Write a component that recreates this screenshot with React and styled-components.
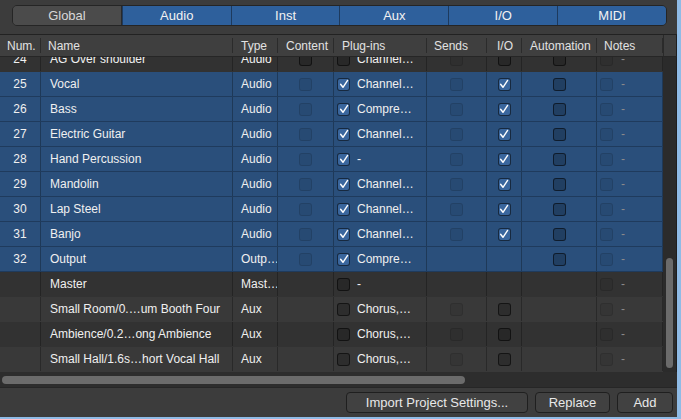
import React from 'react';
import styled, { createGlobalStyle, css } from 'styled-components';

const GlobalStyle = createGlobalStyle`
    html, body {
        margin: 0;
        padding: 0;
        background: #8fbbe6;
    }
    body {
        font-family: "Liberation Sans", Arial, sans-serif;
    }
`;

const COLS = '41px 192px 45px 56px 93px 60px 35px 75px 66px';

const Page = styled.div`
    width: 681px;
    height: 419px;
    background: #8fbbe6;
`;

const Window = styled.div`
    width: 677px;
    height: 417px;
    background: #3c3c3c;
    display: flex;
    flex-direction: column;
    overflow: hidden;
`;

const TopBar = styled.div`
    border-bottom: 1px solid #222;
    padding: 5px 10px 0 12px;
    box-sizing: border-box;
    height: 35px;
`;

const Tabs = styled.div`
    display: flex;
    height: 21px;
    border: 1px solid #252525;
    border-radius: 5px;
    overflow: hidden;
    box-sizing: border-box;
`;

const TabItem = styled.div`
    flex: 1;
    display: flex;
    align-items: center;
    justify-content: center;
    font-size: 13px;
    color: #f2f2f2;
    background: #2e609c;
    border-left: 1px solid #1d3a5e;

    &:first-child {
        border-left: none;
    }

    ${props => props.off && css`
        background: #4b4b4b;
        color: #d8d8d8;
        border-right: 1px solid #2a2a2a;
    `}
`;

const HeaderRow = styled.div`
    display: flex;
    height: 22px;
    background: #3f3f3f;
    border-bottom: 1px solid #262626;
    box-sizing: border-box;
    border-right: 1px solid #1e1e1e;
    position: relative;
    z-index: 1;
`;

const HeaderGrid = styled.div`
    display: grid;
    grid-template-columns: ${COLS};
    width: 663px;
    border-right: 1px solid #2a2a2a;
`;

const HeadCell = styled.div`
    display: flex;
    align-items: center;
    padding-left: ${props => props.pad || 8}px;
    font-size: 12px;
    color: #e2e2e2;
    position: relative;
    white-space: nowrap;

    &::after {
        content: '';
        position: absolute;
        right: 0;
        top: 3px;
        bottom: 3px;
        width: 1px;
        background: #2b2b2b;
    }
`;

const Body = styled.div`
    display: flex;
    height: 315px;
    border-right: 1px solid #1e1e1e;
    overflow: hidden;
`;

const RowList = styled.div`
    width: 663px;
    display: flex;
    flex-direction: column;
    margin-top: -10px;
`;

const Row = styled.div`
    display: grid;
    grid-template-columns: ${COLS};
    height: 25px;
    flex-shrink: 0;
    box-sizing: border-box;
    background: ${props => props.sel ? '#2a4f7b' : props.alt ? '#393939' : '#323232'};
    border-bottom: 1px solid ${props => props.sel ? '#1f3b5d' : 'transparent'};
`;

const Cell = styled.div`
    display: flex;
    align-items: center;
    justify-content: ${props => props.center ? 'center' : 'flex-start'};
    padding-left: ${props => props.pad || 0}px;
    font-size: 12px;
    color: #f0f0f0;
    white-space: nowrap;
    overflow: hidden;
    border-right: 1px solid rgba(0, 0, 0, 0.28);
    gap: ${props => props.gap || 0}px;
`;

const Dash = styled.span`
    color: #8a8a8a;
    font-size: 12px;
`;

const Box = styled.div`
    width: 13px;
    height: 13px;
    box-sizing: border-box;
    border-radius: 3px;
    flex-shrink: 0;
    display: flex;
    align-items: center;
    justify-content: center;

    ${props => props.kind === 'faint' && css`
        background: rgba(0, 0, 0, 0.06);
        border: 1px solid rgba(0, 0, 0, 0.12);
    `}
    ${props => props.kind === 'off' && css`
        background: rgba(0, 0, 0, 0.2);
        border: 1px solid rgba(0, 0, 0, 0.55);
    `}
    ${props => props.kind === 'on' && css`
        background: #3a669d;
        border: 1px solid rgba(0, 0, 0, 0.6);
    `}
`;

const VTrack = styled.div`
    width: 13px;
    background: #2b2b2b;
    display: flex;
    justify-content: center;
`;

const VThumb = styled.div`
    width: 7px;
    height: 110px;
    margin-top: 201px;
    border-radius: 4px;
    background: #6b6b6b;
`;

const HTrack = styled.div`
    height: 15px;
    background: #2d2d2d;
    border-bottom: 1px solid #262626;
    display: flex;
    align-items: center;
`;

const HThumb = styled.div`
    width: 463px;
    height: 8px;
    margin-left: 2px;
    border-radius: 4px;
    background: #6b6b6b;
`;

const Footer = styled.div`
    flex: 1;
    display: flex;
    justify-content: flex-end;
    align-items: flex-start;
    gap: 7px;
    padding: 4px 4px 0 0;
`;

const Button = styled.div`
    height: 21px;
    width: ${props => props.w}px;
    box-sizing: border-box;
    border: 1px solid #1f1f1f;
    border-radius: 4px;
    background: #414141;
    color: #e8e8e8;
    font-size: 13px;
    display: flex;
    align-items: center;
    justify-content: center;
`;

const Check = () => (
    <svg width="10" height="10" viewBox="0 0 10 10">
        <path d="M1.6 5.2 L4 8.3 L8.6 1.4" fill="none" stroke="#fff" strokeWidth="1.4" strokeLinecap="round" strokeLinejoin="round" />
    </svg>
);

const CheckBox = ({ kind }) => {
    if (!kind) return null;
    return (
        <Box kind={kind}>
            {kind === 'on' && <Check />}
        </Box>
    );
};

const tabs = ['Global', 'Audio', 'Inst', 'Aux', 'I/O', 'MIDI'];

const columns = [
    ['Num.', 7], ['Name', 7], ['Type', 8], ['Content', 8], ['Plug-ins', 8],
    ['Sends', 7], ['I/O', 10], ['Automation', 8], ['Notes', 7]
];

const selRow = (num, name, plug) => ({
    num, name, type: 'Audio', sel: true,
    content: 'faint', plugBox: 'on', plug, sends: 'faint', io: 'on', auto: 'off'
});

const rows = [
    { num: 24, name: 'AG Over shoulder', type: 'Audio', content: 'off', plugBox: 'off', plug: 'Channel…', sends: 'faint', io: 'off', auto: 'off' },
    selRow(25, 'Vocal', 'Channel…'),
    selRow(26, 'Bass', 'Compre…'),
    selRow(27, 'Electric Guitar', 'Channel…'),
    selRow(28, 'Hand Percussion', '-'),
    selRow(29, 'Mandolin', 'Channel…'),
    selRow(30, 'Lap Steel', 'Channel…'),
    selRow(31, 'Banjo', 'Channel…'),
    { num: 32, name: 'Output', type: 'Outp…', sel: true, content: 'faint', plugBox: 'on', plug: 'Compre…', auto: 'off' },
    { name: 'Master', type: 'Mast…', plugBox: 'off', plug: '-' },
    { name: 'Small Room/0.…um Booth Four', type: 'Aux', alt: true, plugBox: 'off', plug: 'Chorus,…', sends: 'faint', io: 'off' },
    { name: 'Ambience/0.2…ong Ambience', type: 'Aux', plugBox: 'off', plug: 'Chorus,…', sends: 'faint', io: 'off' },
    { name: 'Small Hall/1.6s…hort Vocal Hall', type: 'Aux', alt: true, plugBox: 'off', plug: 'Chorus,…', sends: 'faint', io: 'off' },
];

const App = () => {
    return (
        <Page>
            <GlobalStyle />
            <Window>
                <TopBar>
                    <Tabs>
                        {tabs.map((t, i) => (
                            <TabItem key={t} off={i === 0}>{t}</TabItem>
                        ))}
                    </Tabs>
                </TopBar>
                <HeaderRow>
                    <HeaderGrid>
                        {columns.map(([label, pad]) => (
                            <HeadCell key={label} pad={pad}>{label}</HeadCell>
                        ))}
                    </HeaderGrid>
                </HeaderRow>
                <Body>
                    <RowList>
                        {rows.map((r, i) => (
                            <Row key={i} sel={r.sel} alt={r.alt}>
                                <Cell center>{r.num}</Cell>
                                <Cell pad={9}>{r.name}</Cell>
                                <Cell pad={8}>{r.type}</Cell>
                                <Cell center><CheckBox kind={r.content} /></Cell>
                                <Cell pad={3} gap={7}>
                                    <CheckBox kind={r.plugBox} />
                                    {r.plug}
                                </Cell>
                                <Cell center><CheckBox kind={r.sends} /></Cell>
                                <Cell center><CheckBox kind={r.io} /></Cell>
                                <Cell center><CheckBox kind={r.auto} /></Cell>
                                <Cell pad={3} gap={8}>
                                    <CheckBox kind="faint" />
                                    <Dash>-</Dash>
                                </Cell>
                            </Row>
                        ))}
                    </RowList>
                    <VTrack>
                        <VThumb />
                    </VTrack>
                </Body>
                <HTrack>
                    <HThumb />
                </HTrack>
                <Footer>
                    <Button w={182}>Import Project Settings...</Button>
                    <Button w={75}>Replace</Button>
                    <Button w={56}>Add</Button>
                </Footer>
            </Window>
        </Page>
    );
};

export default App;
